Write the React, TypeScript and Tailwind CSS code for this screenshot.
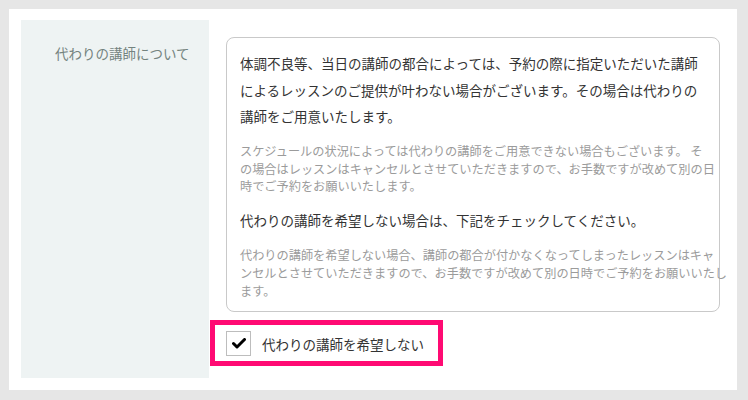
import React from "react";

const jp = { fontFamily: '"Noto Sans CJK JP", "Noto Sans", sans-serif' };

export default function App() {
  return (
    <div className="w-[748px] h-[400px] bg-[#e6e6e6] pt-[9px] pl-[9px]" style={jp}>
      <div className="w-[728px] h-[381px] bg-white flex pt-[11px] pl-[12px] pr-[17px] pb-[12px]">
        <div className="w-[188px] shrink-0 bg-[#eef3f3] pl-[34px] pt-[23px]">
          <div className="text-[13.5px] leading-[20px] text-[#74837f] whitespace-nowrap">代わりの講師について</div>
        </div>
        <div className="ml-[17px] w-[494px] shrink-0 min-w-0 pt-[17px]">
          <div className="border border-[#c9c9c9] rounded-[8px] pt-[12px] px-[13px] pb-[11px]">
            <div className="text-[13.5px] leading-[26.7px] text-[#333] whitespace-nowrap">
              <div>体調不良等、当日の講師の都合によっては、予約の際に指定いただいた講師</div>
              <div>によるレッスンのご提供が叶わない場合がございます。その場合は代わりの</div>
              <div>講師をご用意いたします。</div>
            </div>
            <div className="mt-[12.7px] text-[12.2px] leading-[17.8px] text-[#9b9b9b] whitespace-nowrap">
              <div>スケジュールの状況によっては代わりの講師をご用意できない場合もございます。 そ</div>
              <div>の場合はレッスンはキャンセルとさせていただきますので、お手数ですが改めて別の日</div>
              <div>時でご予約をお願いいたします。</div>
            </div>
            <div className="mt-[10.6px] text-[13.5px] leading-[26.7px] text-[#333] whitespace-nowrap">
              代わりの講師を希望しない場合は、下記をチェックしてください。
            </div>
            <div className="mt-[13.6px] text-[12.2px] leading-[17.8px] text-[#9b9b9b] whitespace-nowrap">
              <div>代わりの講師を希望しない場合、講師の都合が付かなくなってしまったレッスンはキャ</div>
              <div>ンセルとさせていただきますので、お手数ですが改めて別の日時でご予約をお願いいたし</div>
              <div>ます。</div>
            </div>
          </div>
          <div className="relative mt-[19px] flex items-center">
            <div className="w-[25px] h-[25px] border border-[#bdbdbd] bg-white flex items-center justify-center">
              <svg width="14" height="11" viewBox="0 0 14 11">
                <path d="M1.5 5.5 L5 9 L12.5 1.5" fill="none" stroke="#000" strokeWidth="3" strokeLinecap="round" strokeLinejoin="round" />
              </svg>
            </div>
            <span className="ml-[11px] text-[13.5px] leading-[20px] text-[#333] whitespace-nowrap">代わりの講師を希望しない</span>
            <div className="absolute left-[-16px] top-[-11px] w-[233px] h-[46px] border-[5px] border-[#ff0a73]" />
          </div>
        </div>
      </div>
    </div>
  );
}
